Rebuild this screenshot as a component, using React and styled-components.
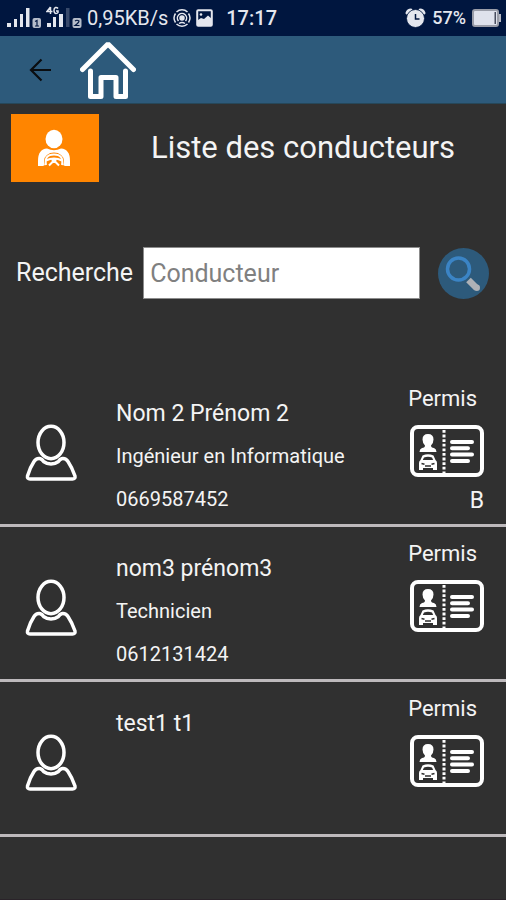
import React, { useState } from 'react';
import styled, { createGlobalStyle } from 'styled-components';

const GlobalStyle = createGlobalStyle`
  * {
    box-sizing: border-box;
  }

  body {
    margin: 0;
    background-color: #303030;
    color: #f4f4f4;
    font-family: Roboto, "Liberation Sans", sans-serif;
  }
`;

const Screen = styled.div`
  min-height: 100vh;
  border-bottom: 1px solid #2a2329;
`;

const StatusBar = styled.div`
  display: flex;
  align-items: center;
  justify-content: space-between;
  height: 36px;
  padding: 0 4px 0 7px;
  background-color: #00163f;
  color: #e4e7ee;
`;

const StatusGroup = styled.div`
  display: flex;
  align-items: center;
  gap: ${({ $gap }) => $gap}px;
`;

const StatusText = styled.span`
  font-size: ${({ $size }) => $size}px;
  font-weight: ${({ $weight }) => $weight || 400};
  line-height: 36px;
  white-space: nowrap;
`;

const Clock = styled(StatusText)`
  margin-left: 8px;
`;

const AppBar = styled.header`
  display: flex;
  align-items: center;
  gap: 26px;
  height: 68px;
  padding: 0 26px;
  background-color: #2d5a7b;
  border-bottom: 1px solid #264759;
`;

const IconButton = styled.button`
  display: flex;
  padding: 0;
  border: none;
  background: none;
  color: inherit;
  cursor: pointer;
`;

const TitleRow = styled.div`
  display: flex;
  align-items: center;
  padding: 10px 11px;
`;

const DriverBadge = styled.div`
  display: flex;
  align-items: center;
  justify-content: center;
  width: 88px;
  height: 68px;
  background-color: #ff8500;
`;

const Title = styled.h1`
  flex: 1;
  margin: 0;
  padding-left: 12px;
  font-size: 31px;
  font-weight: 400;
  line-height: 40px;
  text-align: center;
`;

const SearchForm = styled.form`
  display: flex;
  align-items: center;
  padding: 55px 17px 73px 16px;
`;

const SearchLabel = styled.label`
  margin-right: 10px;
  font-size: 25px;
  line-height: 32px;
`;

const SearchInput = styled.input`
  flex: 1;
  min-width: 0;
  height: 52px;
  margin-right: 18px;
  padding: 0 6px;
  border: 1px solid #8c8c8c;
  border-radius: 0;
  background-color: #fff;
  color: #303030;
  font-family: inherit;
  font-size: 25px;

  &::placeholder {
    color: #808080;
    opacity: 1;
  }
`;

const DriverList = styled.ul`
  margin: 0;
  padding: 0;
  list-style: none;
`;

const DriverRow = styled.li`
  display: flex;
  min-height: 155px;
  padding: 10px 22px 7px 24px;
  border-bottom: 3px solid #bdb9bc;
`;

const Avatar = styled.div`
  width: 92px;
  padding-top: 42px;
`;

const DriverInfo = styled.div`
  flex: 1;
  padding-top: 18px;
`;

const DriverName = styled.h2`
  margin: 0 0 14px;
  font-size: 23px;
  font-weight: 400;
  line-height: 28px;
`;

const Detail = styled.p`
  margin: 0 0 15px;
  font-size: 20px;
  line-height: 28px;

  &:last-child {
    margin-bottom: 0;
  }
`;

const Licence = styled.div`
  display: flex;
  flex-direction: column;
  align-items: flex-end;
`;

const LicenceLabel = styled.span`
  margin: 3px 7px 12px 0;
  font-size: 22px;
  line-height: 28px;
`;

const LicenceClass = styled.span`
  margin-top: 10px;
  font-size: 23px;
  line-height: 28px;
`;

const SignalOne = () => (
  <svg width="34" height="22" viewBox="0 0 34 22" fill="currentColor" aria-hidden="true">
    <rect x="0" y="16" width="4" height="4" />
    <rect x="7" y="12" width="3" height="8" />
    <rect x="13" y="7" width="3" height="13" />
    <rect x="19" y="1" width="3.5" height="19" />
    <rect x="25.5" y="11" width="8.5" height="10" rx="2" opacity=".8" />
    <path d="M28 14.5l2-1v5.5m-2 0h4" fill="none" stroke="#00163f" strokeWidth="1.2" />
  </svg>
);

const SignalTwo = () => (
  <svg width="36" height="25" viewBox="0 0 36 25" fill="currentColor" aria-hidden="true">
    <path
      d="M4.5 1L1 5.500h5.500M4.500 1v7M12 2.500Q11 1.200 9.500 1.500Q7.800 2 8 4.700Q8.200 7.500 10 7.500Q11.500 7.500 12 6.500V5h-2"
      fill="none"
      stroke="currentColor"
      strokeWidth="1.500"
    />
    <rect x="1" y="17" width="4" height="4" />
    <rect x="7" y="11" width="3" height="10" />
    <rect x="13" y="8" width="4" height="13" />
    <rect x="20" y="2" width="3.5" height="19" opacity=".25" />
    <rect x="26.5" y="12" width="9" height="10" rx="2" opacity=".8" />
    <path d="M29 15q2-1.500 4 0q0 1.500-4 4.500h4.500" fill="none" stroke="#00163f" strokeWidth="1.2" />
  </svg>
);

const HotspotIcon = () => (
  <svg width="18" height="18" viewBox="0 0 18 18" fill="none" stroke="currentColor" strokeWidth="1.5" aria-hidden="true">
    <circle cx="9" cy="9" r="2" fill="currentColor" />
    <path d="M5.500 12a4.600 4.600 0 1 1 7 0" />
    <path d="M2.500 13.500Q-.5 9 2.500 4.500M15.500 13.500q3-4.500 0-9" />
    <path d="M3.500 3a8 8 0 0 1 11 0M3.500 15a8 8 0 0 0 11 0M6 14.500q3-2 6 0" />
  </svg>
);

const ImageIcon = () => (
  <svg width="17" height="18" viewBox="0 0 17 18" aria-hidden="true">
    <rect x="1.2" y="1.2" width="14.6" height="15.6" rx="1" fill="none" stroke="currentColor" strokeWidth="2" />
    <circle cx="5" cy="5.5" r="1.3" fill="currentColor" />
    <path d="M2 13v-2l3-2 3 1 4-3.500 4 3.500v6H2z" fill="currentColor" />
  </svg>
);

const AlarmIcon = () => (
  <svg width="21" height="20" viewBox="0 0 21 20" aria-hidden="true">
    <g fill="none" stroke="currentColor" strokeWidth="3" strokeLinecap="round">
      <path d="M2 5Q3 2 6 2M15 2q3 0 4 3" />
    </g>
    <circle cx="10.5" cy="10.5" r="9" fill="currentColor" stroke="#00163f" strokeWidth=".8" />
    <path d="M10.500 6v5h4" fill="none" stroke="#00163f" strokeWidth="1.5" />
  </svg>
);

const BatteryIcon = () => (
  <svg width="30" height="18" viewBox="0 0 30 18" aria-hidden="true">
    <rect x="1" y="1" width="25" height="16" rx="2" fill="#dfe2ec" stroke="#9a9da8" strokeWidth="2" />
    <rect x="22.5" y="3" width="1.5" height="12" fill="#484d5e" />
    <path d="M27 5h2v8h-2z" fill="#b5b8c2" />
  </svg>
);

const BackIcon = () => (
  <svg width="28" height="28" viewBox="0 0 28 28" fill="none" stroke="#0a0d10" strokeWidth="2.2" aria-hidden="true">
    <path d="M25 14H5M15.500 3.500L5 14l10.500 10.500" />
  </svg>
);

const HomeIcon = () => (
  <svg width="56" height="60" viewBox="0 0 56 60" fill="none" stroke="#fff" aria-hidden="true">
    <path d="M2.500 29.500L28 4l25.500 25.500" strokeWidth="5" strokeLinecap="round" strokeLinejoin="bevel" />
    <path d="M10.500 31v25.500h10.500V37.500h15v19h9.500V31" strokeWidth="5" strokeLinecap="round" strokeLinejoin="round" />
  </svg>
);

const DriverIcon = () => (
  <svg width="34" height="38" viewBox="0 0 34 38" aria-hidden="true">
    <ellipse cx="16" cy="10" rx="8.5" ry="9.2" fill="#fff" />
    <path d="M0 37v-5Q0 20 9 19.500q7 3.500 14 0Q32 20 32 32v5h-5l-2-1H7l-2 1z" fill="#fff" />
    <path d="M6 32a10 8.500 0 0 1 20 0L25 37H7z" fill="#ff8500" />
    <g fill="none" stroke="#fff" strokeWidth="2">
      <path d="M8 36Q6 25.500 16 25.500T24 36" />
      <path d="M8 31.500q8-4 16 0M11 36.500l4-4M21 36.500l-4-4" />
    </g>
    <path d="M13 29.500h6L17.500 34h-3z" fill="#fff" />
  </svg>
);

const SearchIcon = () => (
  <svg width="51" height="51" viewBox="0 0 51 51" aria-hidden="true">
    <circle cx="25.5" cy="25.5" r="25.5" fill="#2d5a7b" />
    <circle cx="20.5" cy="21" r="11" fill="none" stroke="#3b84c5" strokeWidth="3.5" />
    <path d="M30.500 32l8 8" stroke="#aeb1b6" strokeWidth="6.5" />
    <circle cx="38.8" cy="39.8" r="3.2" fill="#aeb1b6" />
  </svg>
);

const PersonIcon = () => (
  <svg width="54" height="57" viewBox="0 0 54 57" fill="none" stroke="#fff" strokeWidth="3.5" strokeLinejoin="round" aria-hidden="true">
    <ellipse cx="27" cy="18.5" rx="13" ry="16.2" />
    <path d="M15.500 34.500Q12 34.200 10 37.500Q6 43.500 3.500 52Q3 55 6 55H48.500Q51.500 55 51 52Q48 43.500 44 37.500Q42 34.200 38.500 34.500Q36 34.800 34.500 37.500Q31 40 27 40T19.500 37.500Q18 34.800 15.500 34.500z" />
  </svg>
);

const LicenceIcon = () => (
  <svg width="74" height="52" viewBox="0 0 74 52" aria-hidden="true">
    <rect x="2" y="2" width="70" height="48" rx="6" fill="none" stroke="#fff" strokeWidth="4" />
    <g fill="#fff">
      <path d="M18 9q5.500 0 5.500 5.500Q23.500 18 21 20.500q0 2 3 2.500 2.500 1 2.500 4H9.500q0-3 2.500-4 3-.5 3-2.500-2.500-2.500-2.500-6Q12.500 9 18 9z" />
      <path d="M12.500 30.500Q18 28 23.500 30.500l2 4.500q1.500 1 1.500 3V45h-4v-2H13v2H9v-7q0-2 1.500-3z" />
    </g>
    <path d="M14 32.500q4-1.500 8 0l1.200 2.500H12.800z" fill="#303030" />
    <path d="M11.500 38.500l3 .8M24.500 38.500l-3 .8M15 41h6" stroke="#303030" strokeWidth="1.5" />
    <path d="M34 5v43" stroke="#fff" strokeWidth="3" strokeDasharray="2.800 1.800" />
    <path d="M42 17h20M42 23.300h16M42 29.600h20M42 36h16" stroke="#fff" strokeWidth="4" strokeLinecap="round" />
  </svg>
);

const drivers = [
  { name: 'Nom 2 Prénom 2', job: 'Ingénieur en Informatique', phone: '0669587452', licence: 'B' },
  { name: 'nom3 prénom3', job: 'Technicien', phone: '0612131424' },
  { name: 'test1 t1' },
];

function Driver({ name, job, phone, licence }) {
  return (
    <DriverRow>
      <Avatar>
        <PersonIcon />
      </Avatar>
      <DriverInfo>
        <DriverName>{name}</DriverName>
        {job && <Detail>{job}</Detail>}
        {phone && <Detail>{phone}</Detail>}
      </DriverInfo>
      <Licence>
        <LicenceLabel>Permis</LicenceLabel>
        <LicenceIcon />
        {licence && <LicenceClass>{licence}</LicenceClass>}
      </Licence>
    </DriverRow>
  );
}

function App() {
  const [query, setQuery] = useState('');
  const visible = drivers.filter((d) => d.name.toLowerCase().includes(query.toLowerCase()));

  return (
    <Screen>
      <GlobalStyle />
      <StatusBar>
        <StatusGroup $gap={5}>
          <SignalOne />
          <SignalTwo />
          <StatusText $size={20}>0,95KB/s</StatusText>
          <HotspotIcon />
          <ImageIcon />
          <Clock $size={20} $weight={500}>17:17</Clock>
        </StatusGroup>
        <StatusGroup $gap={6}>
          <AlarmIcon />
          <StatusText $size={18} $weight={500}>57%</StatusText>
          <BatteryIcon />
        </StatusGroup>
      </StatusBar>

      <AppBar>
        <IconButton type="button" aria-label="Retour">
          <BackIcon />
        </IconButton>
        <IconButton type="button" aria-label="Accueil">
          <HomeIcon />
        </IconButton>
      </AppBar>

      <main>
        <TitleRow>
          <DriverBadge>
            <DriverIcon />
          </DriverBadge>
          <Title>Liste des conducteurs</Title>
        </TitleRow>

        <SearchForm onSubmit={(e) => e.preventDefault()}>
          <SearchLabel htmlFor="search">Recherche</SearchLabel>
          <SearchInput
            id="search"
            type="text"
            placeholder="Conducteur"
            value={query}
            onChange={(e) => setQuery(e.target.value)}
          />
          <IconButton type="submit" aria-label="Rechercher">
            <SearchIcon />
          </IconButton>
        </SearchForm>

        <DriverList>
          {visible.map((driver) => (
            <Driver key={driver.name} {...driver} />
          ))}
        </DriverList>
      </main>
    </Screen>
  );
}

export default App;
